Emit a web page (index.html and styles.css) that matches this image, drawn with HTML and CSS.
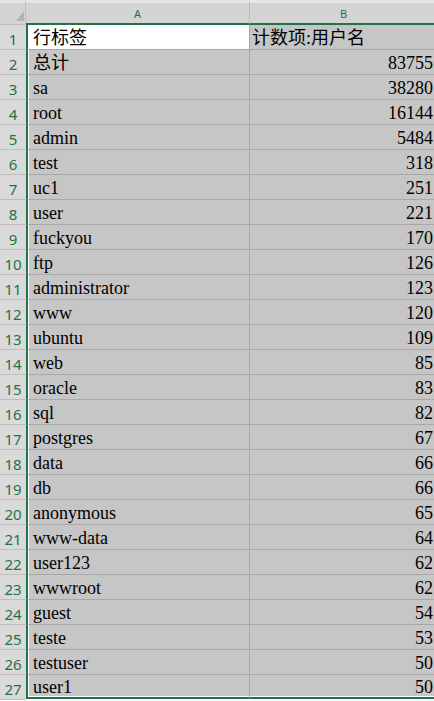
FILE: index.html
```html
<!DOCTYPE html>
<html>
  <head>
    <meta charset="utf-8">
    <meta name="viewport" content="width=device-width, initial-scale=1">
    <link rel="stylesheet" href="styles.css">
    <title>Sheet1</title>
  </head>
  <body>
    <div class="sheet">
      <div class="corner"><span class="tri"></span></div>
      <div class="colhead">A</div>
      <div class="colhead">B</div>

      <div class="rownum">1</div><div class="cell a active">行标签</div><div class="cell b">计数项:用户名</div>
      <div class="rownum">2</div><div class="cell a">总计</div><div class="cell b num">83755</div>
      <div class="rownum">3</div><div class="cell a">sa</div><div class="cell b num">38280</div>
      <div class="rownum">4</div><div class="cell a">root</div><div class="cell b num">16144</div>
      <div class="rownum">5</div><div class="cell a">admin</div><div class="cell b num">5484</div>
      <div class="rownum">6</div><div class="cell a">test</div><div class="cell b num">318</div>
      <div class="rownum">7</div><div class="cell a">uc1</div><div class="cell b num">251</div>
      <div class="rownum">8</div><div class="cell a">user</div><div class="cell b num">221</div>
      <div class="rownum">9</div><div class="cell a">fuckyou</div><div class="cell b num">170</div>
      <div class="rownum">10</div><div class="cell a">ftp</div><div class="cell b num">126</div>
      <div class="rownum">11</div><div class="cell a">administrator</div><div class="cell b num">123</div>
      <div class="rownum">12</div><div class="cell a">www</div><div class="cell b num">120</div>
      <div class="rownum">13</div><div class="cell a">ubuntu</div><div class="cell b num">109</div>
      <div class="rownum">14</div><div class="cell a">web</div><div class="cell b num">85</div>
      <div class="rownum">15</div><div class="cell a">oracle</div><div class="cell b num">83</div>
      <div class="rownum">16</div><div class="cell a">sql</div><div class="cell b num">82</div>
      <div class="rownum">17</div><div class="cell a">postgres</div><div class="cell b num">67</div>
      <div class="rownum">18</div><div class="cell a">data</div><div class="cell b num">66</div>
      <div class="rownum">19</div><div class="cell a">db</div><div class="cell b num">66</div>
      <div class="rownum">20</div><div class="cell a">anonymous</div><div class="cell b num">65</div>
      <div class="rownum">21</div><div class="cell a">www-data</div><div class="cell b num">64</div>
      <div class="rownum">22</div><div class="cell a">user123</div><div class="cell b num">62</div>
      <div class="rownum">23</div><div class="cell a">wwwroot</div><div class="cell b num">62</div>
      <div class="rownum">24</div><div class="cell a">guest</div><div class="cell b num">54</div>
      <div class="rownum">25</div><div class="cell a">teste</div><div class="cell b num">53</div>
      <div class="rownum">26</div><div class="cell a">testuser</div><div class="cell b num">50</div>
      <div class="rownum">27</div><div class="cell a last">user1</div><div class="cell b num last">50</div>
    </div>
  </body>
</html>
```

FILE: styles.css
```css
html, body {
    margin: 0; padding: 0;
    background: #fff;
    overflow: hidden;
}
.sheet {
    display: grid;
    grid-template-columns: 26px 224px 188px;
    grid-auto-rows: 25px;
    width: 438px;
}
.corner, .colhead {
    background: #d4d4d4;
    border-top: 3px solid #e6e6e6;
    box-sizing: border-box;
}
.corner {
    display: flex; justify-content: flex-end; align-items: flex-end;
    padding: 0 1px 3px 0;
    border-right: 1px solid #c0c0c0;
    border-bottom: 1px solid #bcbcbc;
}
.tri {
    width: 0; height: 0;
    border-left: 8px solid transparent;
    border-bottom: 10px solid #b2b2b2;
}
.colhead {
    font-family: "Noto Sans", "Liberation Sans", sans-serif; font-size: 11px;
    color: #217346;
    text-align: center; line-height: 18px;
    padding-top: 2px;
    border-bottom: 2px solid #217346;
    border-right: 1px solid #bababa;
}
.rownum {
    font-family: "Noto Sans", "Liberation Sans", sans-serif; font-size: 15px;
    color: #217346;
    background: #dadada;
    text-align: center; line-height: 24px;
    padding-top: 2px;
    border-bottom: 1px solid #bdbdbd;
    box-sizing: border-box;
}
.cell {
    font-family: "Liberation Serif", "Noto Sans CJK SC", serif; font-size: 18px;
    color: #000;
    background: #c6c6c6;
    line-height: 24px;
    padding-top: 1px;
    white-space: nowrap; overflow: hidden;
    border-bottom: 1px solid #a8a8a8;
    border-right: 1px solid #a8a8a8;
    box-sizing: border-box;
}
.cell.a {
    border-left: 2px solid #217346;
    box-shadow: inset 1px 0 0 #fff;
    padding-left: 5px;
}
.cell.b { padding-left: 2px; padding-right: 4px; }
.cell.num { text-align: right; }
.cell.active { background: #fff; }
.cell.last {
    height: 24px;
    border-bottom: 2px solid #217346;
    line-height: 22px;
}
.cell.a.last { box-shadow: inset 1px 0 0 #fff, inset 0 -1px 0 #fff; }
.cell.b.last { box-shadow: inset 0 -1px 0 #fff; }
```
